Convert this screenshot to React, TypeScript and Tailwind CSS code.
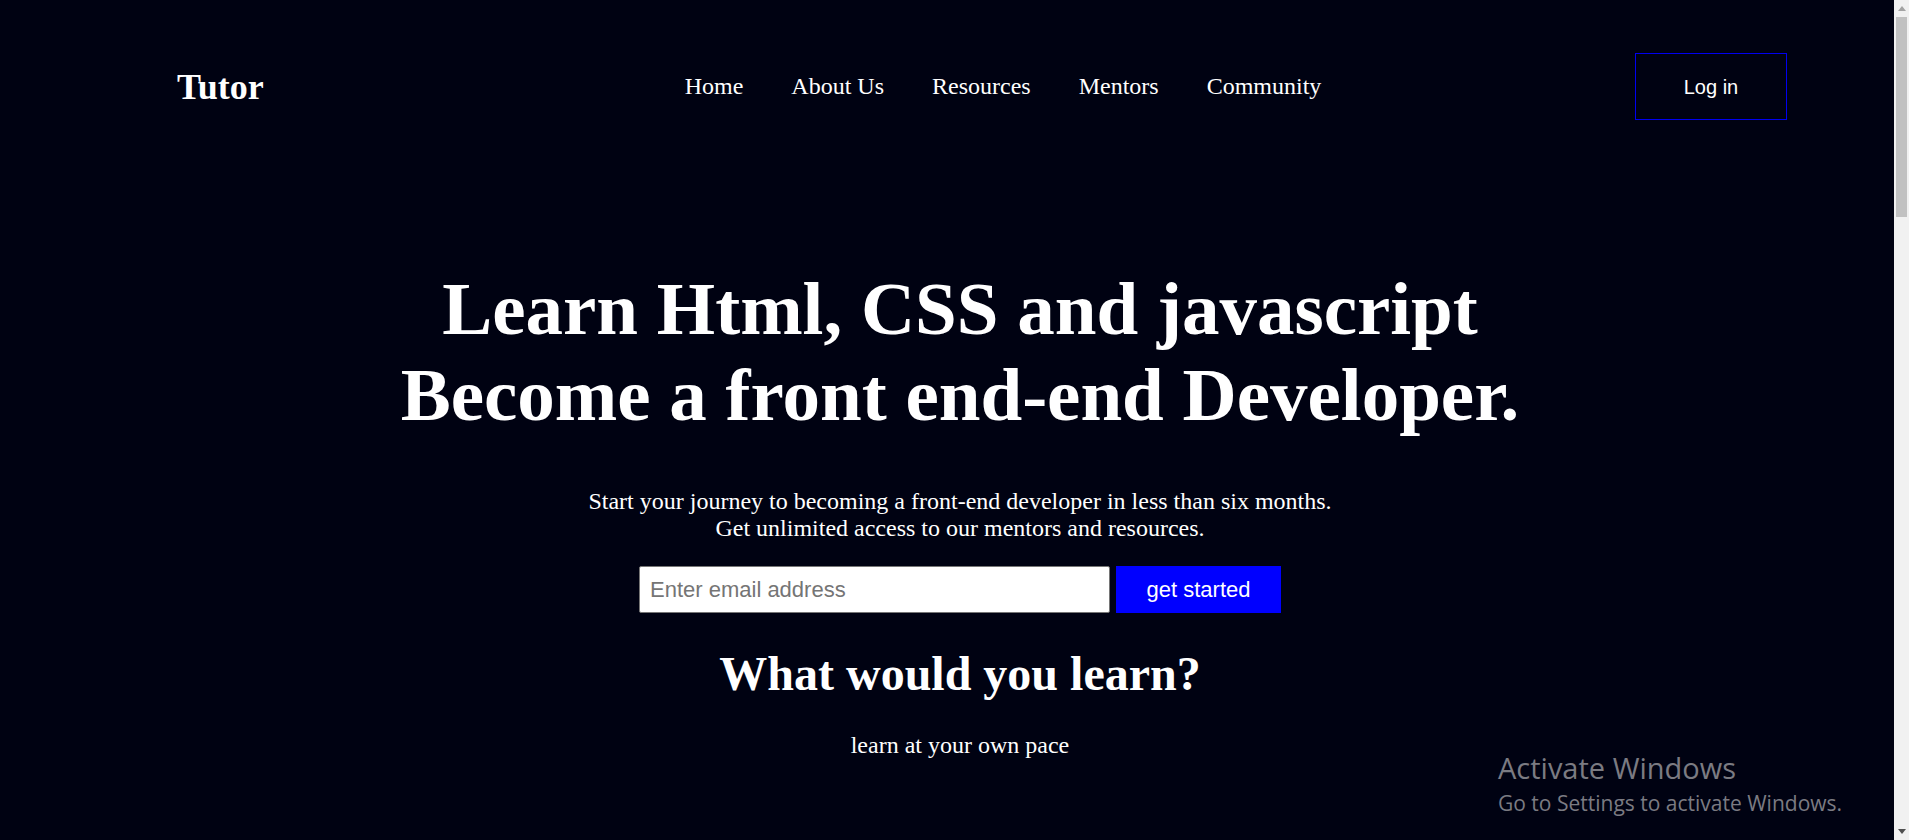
import React from "react";

const serif = { fontFamily: '"Liberation Serif", "Times New Roman", serif' };
const sans = { fontFamily: '"Liberation Sans", Arial, sans-serif' };

export default function App() {
  return (
    <div className="relative flex h-[840px] w-full overflow-hidden bg-[#000212]">
      <div className="flex min-w-0 flex-1 flex-col text-white" style={serif}>
        <header className="flex items-center pt-[53px] pl-[177px] pr-[107px]">
          <div className="text-[36px] font-bold leading-[40px]">Tutor</div>
          <nav className="mb-[2px] ml-[421px] flex items-center gap-[48px] text-[24px] leading-[28px]">
            <a>Home</a>
            <a>About Us</a>
            <a>Resources</a>
            <a>Mentors</a>
            <a>Community</a>
          </nav>
          <button
            className="ml-auto flex h-[67px] w-[152px] items-center justify-center border border-[#0000ee] text-[20px] text-white"
            style={sans}
          >
            Log in
          </button>
        </header>

        <section className="flex flex-col items-center pl-[26px] text-center">
          <h1 className="mt-[146px] text-[75px] font-bold leading-[86px]">
            Learn Html, CSS and javascript
            <br />
            Become a front end-end Developer.
          </h1>
          <p className="mt-[50px] text-[24px] leading-[27px]">
            Start your journey to becoming a front-end developer in less than six months.
            <br />
            Get unlimited access to our mentors and resources.
          </p>
          <form className="mt-[24px] flex items-stretch gap-[6px]" onSubmit={(e) => e.preventDefault()}>
            <input
              type="email"
              placeholder="Enter email address"
              className="h-[47px] w-[471px] rounded-[2px] border border-[#767676] bg-white px-[10px] text-[22px] text-black placeholder:text-[#757575] outline-none"
              style={sans}
            />
            <button
              type="submit"
              className="h-[47px] w-[165px] bg-[#0000ff] text-[22px] text-white"
              style={sans}
            >
              get started
            </button>
          </form>
          <h2 className="mt-[33px] text-[48px] font-bold leading-[55px]">What would you learn?</h2>
          <p className="mt-[31px] text-[24px] leading-[27px]">learn at your own pace</p>
        </section>
      </div>

      <div className="relative flex w-[15px] shrink-0 flex-col bg-[#f1f1f1]">
        <div className="flex h-[17px] items-center justify-center">
          <svg width="8" height="5" viewBox="0 0 8 5">
            <polygon points="4,0 8,5 0,5" fill="#a3a3a3" />
          </svg>
        </div>
        <div className="mx-[2px] h-[200px] bg-[#c1c1c1]" />
        <div className="mt-auto flex h-[17px] items-center justify-center">
          <svg width="8" height="5" viewBox="0 0 8 5">
            <polygon points="0,0 8,0 4,5" fill="#505050" />
          </svg>
        </div>
      </div>

      <div
        className="pointer-events-none absolute left-[1498px] top-[748px] text-[#7b7b82]"
        style={{ fontFamily: '"Open Sans", "Noto Sans", sans-serif' }}
      >
        <div className="text-[29px] leading-[40px]">Activate Windows</div>
        <div className="text-[21px] leading-[31px]">Go to Settings to activate Windows.</div>
      </div>
    </div>
  );
}
